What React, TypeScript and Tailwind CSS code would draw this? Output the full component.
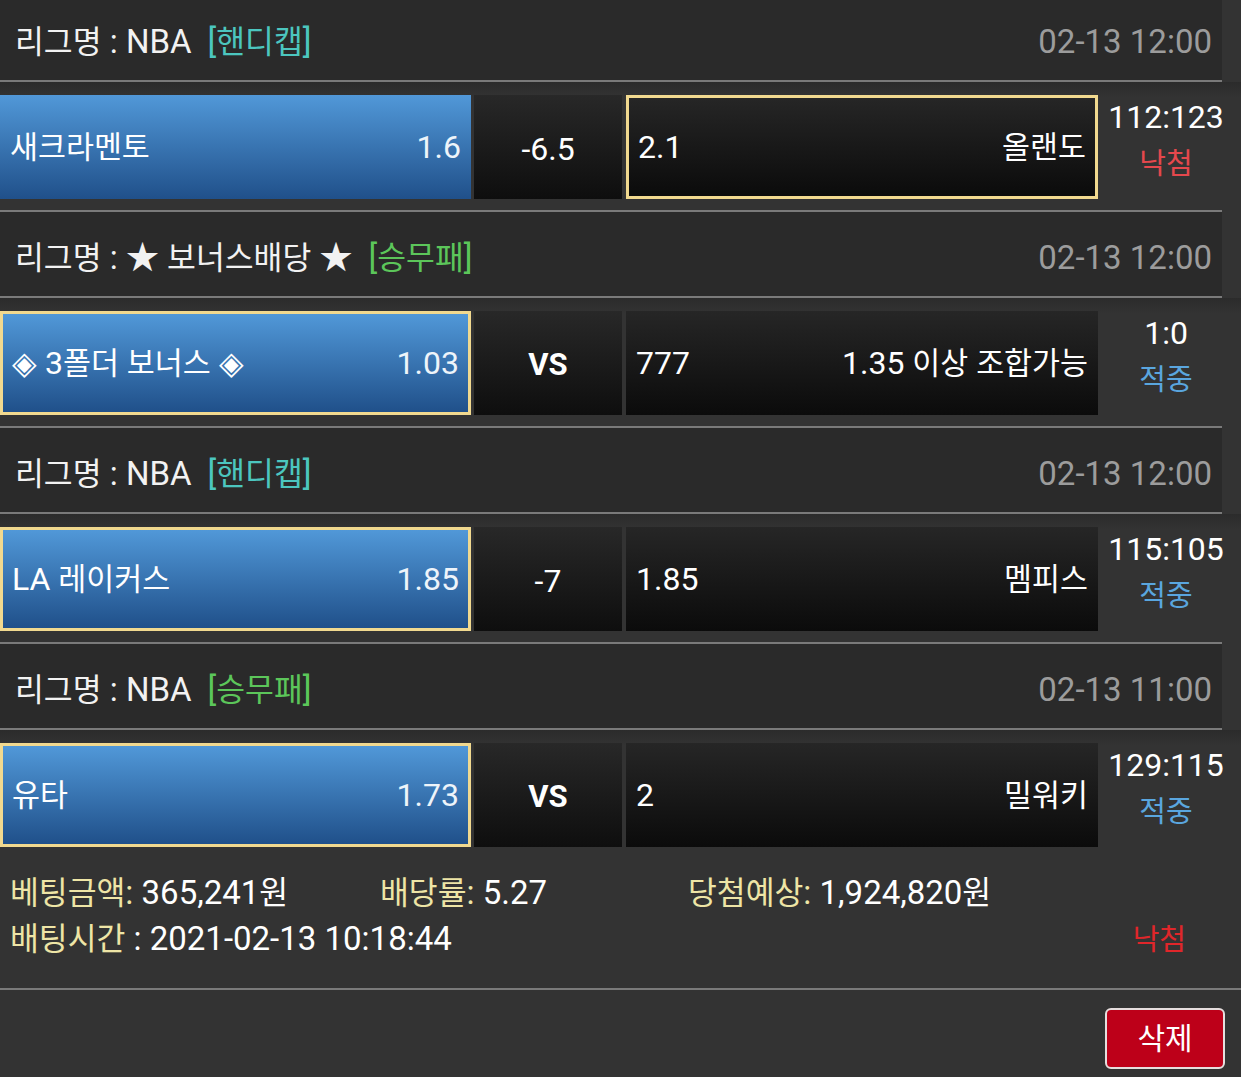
import React from "react";

type Row = {
  league: string;
  type: string;
  typeColor: string;
  date: string;
  home: string;
  homeOdds: string;
  mid: string;
  bold: boolean;
  awayOdds: string;
  away: string;
  sel: "home" | "away";
  score: string;
  result: string;
  resultColor: string;
};

const TEAL = "text-[#4cc6bf]";
const GREEN = "text-[#5cc65a]";
const RED = "text-[#e5484d]";
const BLUE = "text-[#5aa6df]";

const rows: Row[] = [
  {
    league: "NBA",
    type: "[핸디캡]",
    typeColor: TEAL,
    date: "02-13 12:00",
    home: "새크라멘토",
    homeOdds: "1.6",
    mid: "-6.5",
    bold: false,
    awayOdds: "2.1",
    away: "올랜도",
    sel: "away",
    score: "112:123",
    result: "낙첨",
    resultColor: RED,
  },
  {
    league: "★ 보너스배당 ★",
    type: "[승무패]",
    typeColor: GREEN,
    date: "02-13 12:00",
    home: "◈ 3폴더 보너스 ◈",
    homeOdds: "1.03",
    mid: "VS",
    bold: true,
    awayOdds: "777",
    away: "1.35 이상 조합가능",
    sel: "home",
    score: "1:0",
    result: "적중",
    resultColor: BLUE,
  },
  {
    league: "NBA",
    type: "[핸디캡]",
    typeColor: TEAL,
    date: "02-13 12:00",
    home: "LA 레이커스",
    homeOdds: "1.85",
    mid: "-7",
    bold: false,
    awayOdds: "1.85",
    away: "멤피스",
    sel: "home",
    score: "115:105",
    result: "적중",
    resultColor: BLUE,
  },
  {
    league: "NBA",
    type: "[승무패]",
    typeColor: GREEN,
    date: "02-13 11:00",
    home: "유타",
    homeOdds: "1.73",
    mid: "VS",
    bold: true,
    awayOdds: "2",
    away: "밀워키",
    sel: "home",
    score: "129:115",
    result: "적중",
    resultColor: BLUE,
  },
];

// Hangul runs are set slightly smaller than the Latin digits, as in the reference.
function K({ t }: { t: string }) {
  const parts = t.split(/([\uAC00-\uD7A3]+)/);
  return (
    <>
      {parts.map((p, i) =>
        /[\uAC00-\uD7A3]/.test(p) ? (
          <span key={i} className="text-[0.95em]">
            {p}
          </span>
        ) : (
          <React.Fragment key={i}>{p}</React.Fragment>
        )
      )}
    </>
  );
}

function Sep() {
  return <div className="h-[2px] w-[1222px] bg-[#7a7a7a]" />;
}

function Header({ r }: { r: Row }) {
  return (
    <div className="flex h-[84px] w-[1222px] items-center justify-between bg-[#2a2a2a] pl-[15px] pr-[10px] pt-[8px] text-[33px]">
      <div className="flex items-baseline">
        <span className="text-[#f2f2f2]">
          <K t={`리그명 : ${r.league}`} />
        </span>
        <span className={`ml-[16px] ${r.typeColor}`}>
          <K t={r.type} />
        </span>
      </div>
      <span className="text-[#9c9c9c]">{r.date}</span>
    </div>
  );
}

function BetRow({ r }: { r: Row }) {
  const selBorder = "border-[3px] border-[#f1d98f]";
  return (
    <div className="flex h-[128px] w-full items-start bg-[linear-gradient(to_bottom,#2b2b2b,#333333_12%)] pt-[13px] text-[32px] text-white">
      <div
        className={`flex h-[104px] w-[471px] items-center justify-between bg-[linear-gradient(to_bottom,#5198d8,#20508a)] ${
          r.sel === "home" ? `${selBorder} pl-[9px] pr-[9px]` : "pl-[10px] pr-[10px]"
        }`}
      >
        <span>
          <K t={r.home} />
        </span>
        <span className="text-[#eef4fa]">{r.homeOdds}</span>
      </div>
      <div
        className={`ml-[3px] flex h-[104px] w-[148px] items-center justify-center bg-[linear-gradient(to_bottom,#282828,#0e0e0e)] pt-[4px] ${
          r.bold ? "font-bold text-[31px]" : ""
        }`}
      >
        {r.mid}
      </div>
      <div
        className={`ml-[4px] flex h-[104px] w-[472px] items-center justify-between bg-[linear-gradient(to_bottom,#262626,#0b0b0b)] ${
          r.sel === "away" ? `${selBorder} pl-[9px] pr-[9px]` : "pl-[10px] pr-[10px]"
        }`}
      >
        <span>{r.awayOdds}</span>
        <span>
          <K t={r.away} />
        </span>
      </div>
      <div className="flex w-[136px] flex-col items-center text-[32px] leading-[47px] -mt-[1px]">
        <span>{r.score}</span>
        <span className={`text-[29px] ${r.resultColor}`}>{r.result}</span>
      </div>
    </div>
  );
}

export default function App() {
  return (
    <div
      className="min-h-[1077px] w-[1241px] overflow-hidden bg-[#333333]"
      style={{ fontFamily: 'Roboto, "Noto Sans CJK KR", "Noto Sans", sans-serif' }}
    >
      <div className="-mt-[4px]">
        {rows.map((r, i) => (
          <React.Fragment key={i}>
            <Header r={r} />
            <Sep />
            <BetRow r={r} />
            {i < rows.length - 1 && <Sep />}
          </React.Fragment>
        ))}
        <div className="h-[130px] pl-[10px] pr-[55px] pt-[12px] text-[33px] leading-[45px] text-white">
          <div className="flex items-baseline">
            <span className="w-[370px]">
              <span className="text-[#eee5a6]">
                <K t="베팅금액:" />
              </span>{" "}
              <K t="365,241원" />
            </span>
            <span className="w-[308px]">
              <span className="text-[#eee5a6]">
                <K t="배당률:" />
              </span>{" "}
              5.27
            </span>
            <span>
              <span className="text-[#eee5a6]">
                <K t="당첨예상:" />
              </span>{" "}
              <K t="1,924,820원" />
            </span>
          </div>
          <div className="flex items-baseline justify-between">
            <span>
              <span className="text-[#eee5a6]">
                <K t="배팅시간" />
              </span>{" "}
              : 2021-02-13 10:18:44
            </span>
            <span className="text-[29px] text-[#e0262a]">낙첨</span>
          </div>
        </div>
        <div className="h-[2px] w-full bg-[#7a7a7a]" />
        <div className="flex justify-end pr-[16px] pt-[18px]">
          <button className="flex h-[61px] w-[120px] items-center justify-center rounded-[6px] border-[2px] border-[#e6dede] bg-[#bd0019] text-[30px] text-white">
            삭제
          </button>
        </div>
      </div>
    </div>
  );
}
